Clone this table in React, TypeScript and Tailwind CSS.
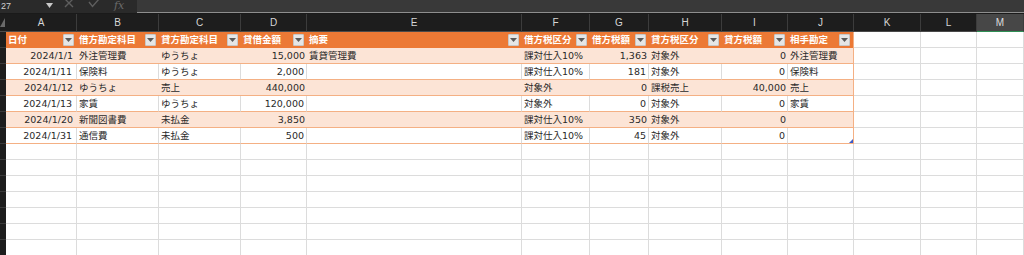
import React from "react";

const GRID =
  "grid grid-cols-[6px_71px_82px_82px_66px_215px_68px_59px_73px_66px_66px_67px_56px_1fr]";

const headers = ["日付", "借方勘定科目", "貸方勘定科目", "貸借金額", "摘要", "借方税区分", "借方税額", "貸方税区分", "貸方税額", "相手勘定"];

const rows: string[][] = [
  ["2024/1/1", "外注管理費", "ゆうちょ", "15,000", "賃貸管理費", "課対仕入10%", "1,363", "対象外", "0", "外注管理費"],
  ["2024/1/11", "保険料", "ゆうちょ", "2,000", "", "課対仕入10%", "181", "対象外", "0", "保険料"],
  ["2024/1/12", "ゆうちょ", "売上", "440,000", "", "対象外", "0", "課税売上", "40,000", "売上"],
  ["2024/1/13", "家賃", "ゆうちょ", "120,000", "", "対象外", "0", "対象外", "0", "家賃"],
  ["2024/1/20", "新聞図書費", "未払金", "3,850", "", "課対仕入10%", "350", "対象外", "0", ""],
  ["2024/1/31", "通信費", "未払金", "500", "", "課対仕入10%", "45", "対象外", "0", ""],
];

const rightAligned = [true, false, false, true, false, false, true, false, true, false];
const letters = ["A", "B", "C", "D", "E", "F", "G", "H", "I", "J", "K", "L", "M"];

function FilterButton() {
  return (
    <div className="mr-[3px] flex h-[12px] w-[11px] shrink-0 items-center justify-center rounded-[1px] bg-[#e6e6e6] border border-[#c8c8c8]">
      <svg width="7" height="4" viewBox="0 0 7 4">
        <path d="M0 0 L7 0 L3.5 4 Z" fill="#5a5a5a" />
      </svg>
    </div>
  );
}

function RowHead() {
  return <div className="h-full bg-[#1d1d1d] border-b border-[#3a3a3a]" />;
}

function Blank() {
  return <div className="h-full bg-white border-r border-b border-[#dcdcdc]" />;
}

export default function App() {
  return (
    <div className="w-[1024px] h-[255px] overflow-hidden bg-white font-['DejaVu_Sans','Noto_Sans_CJK_JP',sans-serif] text-[#2a2a2a]">
      {/* Formula bar */}
      <div className="flex h-[13px] bg-[#2a2a2a]">
        <div className="flex w-[137px] shrink-0 items-start overflow-hidden">
          <div className="w-[46px] pt-[1px] pl-[1px] font-['Liberation_Sans',sans-serif] text-[9px] leading-[10px] text-[#cfcfcf]">27</div>
          <div className="mt-[3px] w-[18px]">
            <svg width="7" height="5" viewBox="0 0 7 5">
              <path d="M0 0 L7 0 L3.5 5 Z" fill="#c8c8c8" />
            </svg>
          </div>
          <div className="flex items-start gap-[12px] text-[#5c5c5c]">
            <svg width="10" height="9" viewBox="0 0 10 9" className="-mt-[1px]">
              <path d="M1 0 L9 8 M9 0 L1 8" stroke="#5e5e5e" strokeWidth="1.4" />
            </svg>
            <svg width="12" height="9" viewBox="0 0 12 9" className="-mt-[1px] ml-[2px]">
              <path d="M1 3 L4.5 7.5 L11 0" stroke="#5e5e5e" strokeWidth="1.4" fill="none" />
            </svg>
            <span className="ml-[2px] font-['DejaVu_Serif',serif] italic text-[11px] leading-[11px] text-[#6a6a6a]">fx</span>
          </div>
        </div>
        <div className="flex-1 bg-[#393939] border-b border-[#8e8e8e]" />
      </div>
      <div className="h-[1px] bg-[#1a1a1a]" />

      {/* Column headers */}
      <div className={`${GRID} h-[18px]`}>
        <div className="relative h-full bg-[#1d1d1d] border-b border-[#4a4a4a]">
          <svg width="6" height="10" viewBox="0 0 6 10" className="absolute left-0 top-[4px]">
            <path d="M5 0 L5 9 L0 9 Z" fill="#6a6a6a" />
          </svg>
        </div>
        {letters.map((l) => (
          <div
            key={l}
            className={
              l === "M"
                ? "flex h-full items-center justify-center bg-[#474747] border-r border-[#3c3c3c] border-b border-b-[#2f8f55] font-['Liberation_Sans',sans-serif] text-[10px] text-[#dedede]"
                : "flex h-full items-center justify-center bg-[#1d1d1d] border-r border-[#3c3c3c] border-b border-b-[#4a4a4a] font-['Liberation_Sans',sans-serif] text-[10px] text-[#d6d6d6]"
            }
          >
            {l}
          </div>
        ))}
      </div>

      {/* Table header row */}
      <div className={`${GRID} h-4`}>
        <RowHead />
        {headers.map((h, i) => (
          <div
            key={h}
            className={
              i === 9
                ? "flex h-full items-center justify-between bg-[#ec7935] border-r border-[#f4b084] pl-[2px]"
                : "flex h-full items-center justify-between bg-[#ec7935] pl-[2px]"
            }
          >
            <span className="text-[9.5px] font-bold leading-none text-white whitespace-nowrap">{h}</span>
            <FilterButton />
          </div>
        ))}
        <Blank />
        <Blank />
        <Blank />
      </div>

      {/* Data rows */}
      {rows.map((r, ri) => {
        const banded = ri % 2 === 0;
        const last = ri === rows.length - 1;
        return (
          <div key={ri} className={`${GRID} h-4`}>
            <RowHead />
            {r.map((v, ci) => {
              const isLastCol = ci === 9;
              let cls = "relative flex h-full items-center whitespace-nowrap text-[9.5px] leading-none border-b border-b-[#f4b084] ";
              cls += rightAligned[ci] ? (ci === 0 ? "justify-end pr-[4px] " : "justify-end pr-[2px] ") : "justify-start pl-[2px] ";
              if (banded) {
                cls += isLastCol ? "bg-[#fce4d6] border-r border-r-[#f4b084]" : "bg-[#fce4d6]";
              } else {
                cls += isLastCol ? "bg-white border-r border-r-[#f4b084]" : "bg-white border-r border-r-[#dcdcdc]";
              }
              return (
                <div key={ci} className={cls}>
                  {v}
                  {last && isLastCol && (
                    <svg width="4" height="4" viewBox="0 0 4 4" className="absolute right-0 bottom-0">
                      <path d="M4 0 L4 4 L0 4 Z" fill="#3c5cc8" />
                    </svg>
                  )}
                </div>
              );
            })}
            <Blank />
            <Blank />
            <Blank />
          </div>
        );
      })}

      {/* Empty rows */}
      {Array.from({ length: 7 }).map((_, i) => (
        <div key={i} className={`${GRID} h-4`}>
          <RowHead />
          {letters.map((l) => (
            <Blank key={l} />
          ))}
        </div>
      ))}
    </div>
  );
}
